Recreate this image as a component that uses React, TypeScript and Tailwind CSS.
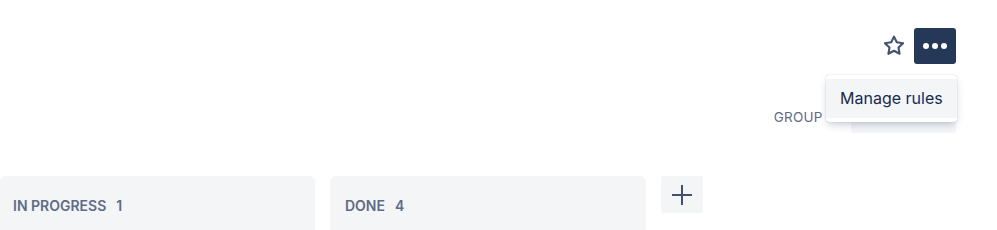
import React from "react";

function StarIcon() {
  return (
    <svg width="24" height="24" viewBox="0 0 24 24" fill="none">
      <path
        d="M12 2.6l2.8 5.7 6.3.9-4.6 4.4 1.1 6.2L12 16.8l-5.6 3 1.1-6.2-4.6-4.4 6.3-.9z"
        stroke="#42526e"
        strokeWidth="2.1"
        strokeLinejoin="round"
      />
    </svg>
  );
}

function PlusIcon() {
  return (
    <svg width="22" height="22" viewBox="0 0 22 22">
      <path d="M11 1v20M1 11h20" stroke="#42526e" strokeWidth="2" />
    </svg>
  );
}

export default function App() {
  return (
    <div className="relative h-[230px] w-[997px] overflow-hidden bg-white font-['Inter',sans-serif]">
      {/* header actions */}
      <div className="flex items-center justify-end gap-2 pr-[41px] pt-7">
        <button className="flex h-9 w-6 items-center justify-center">
          <StarIcon />
        </button>
        <button className="flex h-9 w-[42px] items-center justify-center gap-[3px] rounded-[3px] bg-[#253858]">
          <span className="h-[6px] w-[6px] rounded-full bg-white" />
          <span className="h-[6px] w-[6px] rounded-full bg-white" />
          <span className="h-[6px] w-[6px] rounded-full bg-white" />
        </button>
      </div>

      {/* group by */}
      <div className="mt-[37px] flex items-center justify-end gap-[6px] pr-[41px]">
        <span className="text-[13.5px] tracking-[0.2px] text-[#5e6c84]">GROUP BY</span>
        <div className="h-8 w-[105px] rounded-[3px] bg-[#f4f5f7]" />
      </div>

      {/* columns */}
      <div className="mt-[43px] flex items-start gap-[15px]">
        <div className="h-[60px] w-[315px] rounded-t-[6px] bg-[#f4f5f7] px-[13px] pt-[17px]">
          <span className="text-[14px] font-semibold text-[#5e6c84]">
            IN PROGRESS<span className="ml-[10px]">1</span>
          </span>
        </div>
        <div className="h-[60px] w-[316px] rounded-t-[6px] bg-[#f4f5f7] px-[15px] pt-[17px]">
          <span className="text-[14px] font-semibold text-[#5e6c84]">
            DONE<span className="ml-[10px]">4</span>
          </span>
        </div>
        <button className="flex h-[37px] w-[42px] items-center justify-center rounded-[3px] bg-[#f4f5f7]">
          <PlusIcon />
        </button>
      </div>

      {/* dropdown menu */}
      <div className="absolute left-[826px] top-[75px] w-[131px] rounded-[3px] bg-white py-1 shadow-[0_4px_8px_-2px_rgba(9,30,66,0.25),0_0_1px_rgba(9,30,66,0.31)]">
        <div className="bg-[#f4f5f7] px-[14px] py-[8px] text-[16px] leading-[23px] text-[#172b4d]">
          Manage rules
        </div>
      </div>
    </div>
  );
}
